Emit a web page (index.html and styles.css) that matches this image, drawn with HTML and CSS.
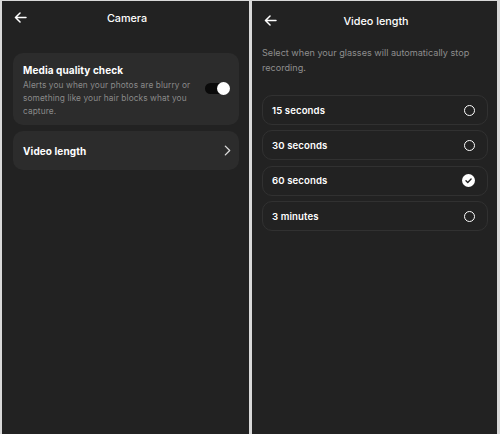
FILE: index.html
```html
<!DOCTYPE html>
<html lang="en">
<head>
  <meta charset="UTF-8">
  <title>Camera settings</title>
  <link rel="stylesheet" href="styles.css">
</head>
<body>
  <div class="screens">
    <section class="screen">
      <header class="topbar">
        <svg class="back" viewBox="0 0 14 12" width="13" height="11"><path d="M13 6H1.5M6.5 1L1.5 6l5 5" fill="none" stroke="#fff" stroke-width="1.6" stroke-linecap="round" stroke-linejoin="round"/></svg>
        <div class="title">Camera</div>
      </header>
      <div class="cards">
        <div class="card card-toggle">
          <div class="card-text">
            <div class="card-title">Media quality check</div>
            <div class="card-desc">Alerts you when your photos are blurry or something like your hair blocks what you capture.</div>
          </div>
          <div class="toggle"><span class="knob"></span></div>
        </div>
        <div class="card card-link">
          <div class="card-title">Video length</div>
          <svg class="chevron" viewBox="0 0 8 12" width="7" height="11"><path d="M1.5 1l5 5-5 5" fill="none" stroke="#ddd" stroke-width="1.5" stroke-linecap="round" stroke-linejoin="round"/></svg>
        </div>
      </div>
    </section>
    <section class="screen screen-right">
      <header class="topbar topbar-right">
        <svg class="back" viewBox="0 0 14 12" width="13" height="11"><path d="M13 6H1.5M6.5 1L1.5 6l5 5" fill="none" stroke="#fff" stroke-width="1.6" stroke-linecap="round" stroke-linejoin="round"/></svg>
        <div class="title">Video length</div>
      </header>
      <p class="intro">Select when your glasses will automatically stop recording.</p>
      <div class="options">
        <div class="option"><span>15 seconds</span><span class="radio"></span></div>
        <div class="option"><span>30 seconds</span><span class="radio"></span></div>
        <div class="option"><span>60 seconds</span>
          <svg class="radio-on" viewBox="0 0 14 14" width="13" height="13"><circle cx="7" cy="7" r="7" fill="#fff"/><path d="M4.3 7.2l1.9 1.9 3.6-3.8" fill="none" stroke="#222" stroke-width="1.5" stroke-linecap="round" stroke-linejoin="round"/></svg>
        </div>
        <div class="option"><span>3 minutes</span><span class="radio"></span></div>
      </div>
    </section>
  </div>
</body>
</html>
```

FILE: styles.css
```css
body {
  margin: 0;
  background: #d9d9d9;
  font-family: 'Inter', 'Noto Sans', sans-serif;
  color: #fff;
}
.screens {
  display: flex;
  gap: 3px;
  padding: 1px 3px 0 2px;
  height: 433px;
}
.screen {
  width: 247px;
  background: #222222;
}
.screen-right {
  width: 245px;
}
.topbar {
  position: relative;
  height: 35px;
  display: flex;
  align-items: center;
  justify-content: center;
}
.topbar-right {
  height: 41px;
}
.back {
  position: absolute;
  left: 12px;
  top: 11px;
}
.topbar-right .back {
  top: 14px;
}
.title {
  font-size: 10.8px;
  font-weight: 500;
  margin-left: 3px;
}
.cards {
  display: flex;
  flex-direction: column;
  gap: 6px;
  padding: 17px 10px 0 11px;
}
.card {
  background: #2c2c2c;
  border-radius: 10px;
  display: flex;
  align-items: center;
  padding: 0 8px 0 10px;
}
.card-toggle {
  height: 72px;
  align-items: flex-start;
  padding-top: 10px;
  box-sizing: border-box;
}
.card-link {
  height: 39px;
  justify-content: space-between;
}
.card-text {
  flex: 1;
}
.card-title {
  font-size: 10px;
  font-weight: 700;
  line-height: 14px;
  letter-spacing: 0.1px;
}
.card-desc {
  font-size: 8.3px;
  line-height: 13px;
  letter-spacing: 0.1px;
  color: #8a8a8a;
  margin-top: 2px;
  width: 175px;
}
.toggle {
  position: relative;
  width: 23px;
  height: 11px;
  background: #0a0a0a;
  border-radius: 6px;
  margin: 20px 3px 0 0;
}
.knob {
  position: absolute;
  right: -2px;
  top: -1px;
  width: 13px;
  height: 13px;
  border-radius: 50%;
  background: #fff;
}
.intro {
  margin: 3px 10px 0;
  font-size: 9.1px;
  line-height: 15px;
  color: #8e8e8e;
}
.options {
  display: flex;
  flex-direction: column;
  gap: 5.4px;
  padding: 20px 9px 0 10px;
}
.option {
  height: 30px;
  box-sizing: border-box;
  border: 1px solid #313131;
  border-radius: 10px;
  display: flex;
  align-items: center;
  justify-content: space-between;
  padding: 0 12px 0 9px;
  font-size: 9.6px;
  font-weight: 600;
  letter-spacing: 0.1px;
}
.radio {
  width: 9px;
  height: 9px;
  border: 1.5px solid #fff;
  border-radius: 50%;
}
```
